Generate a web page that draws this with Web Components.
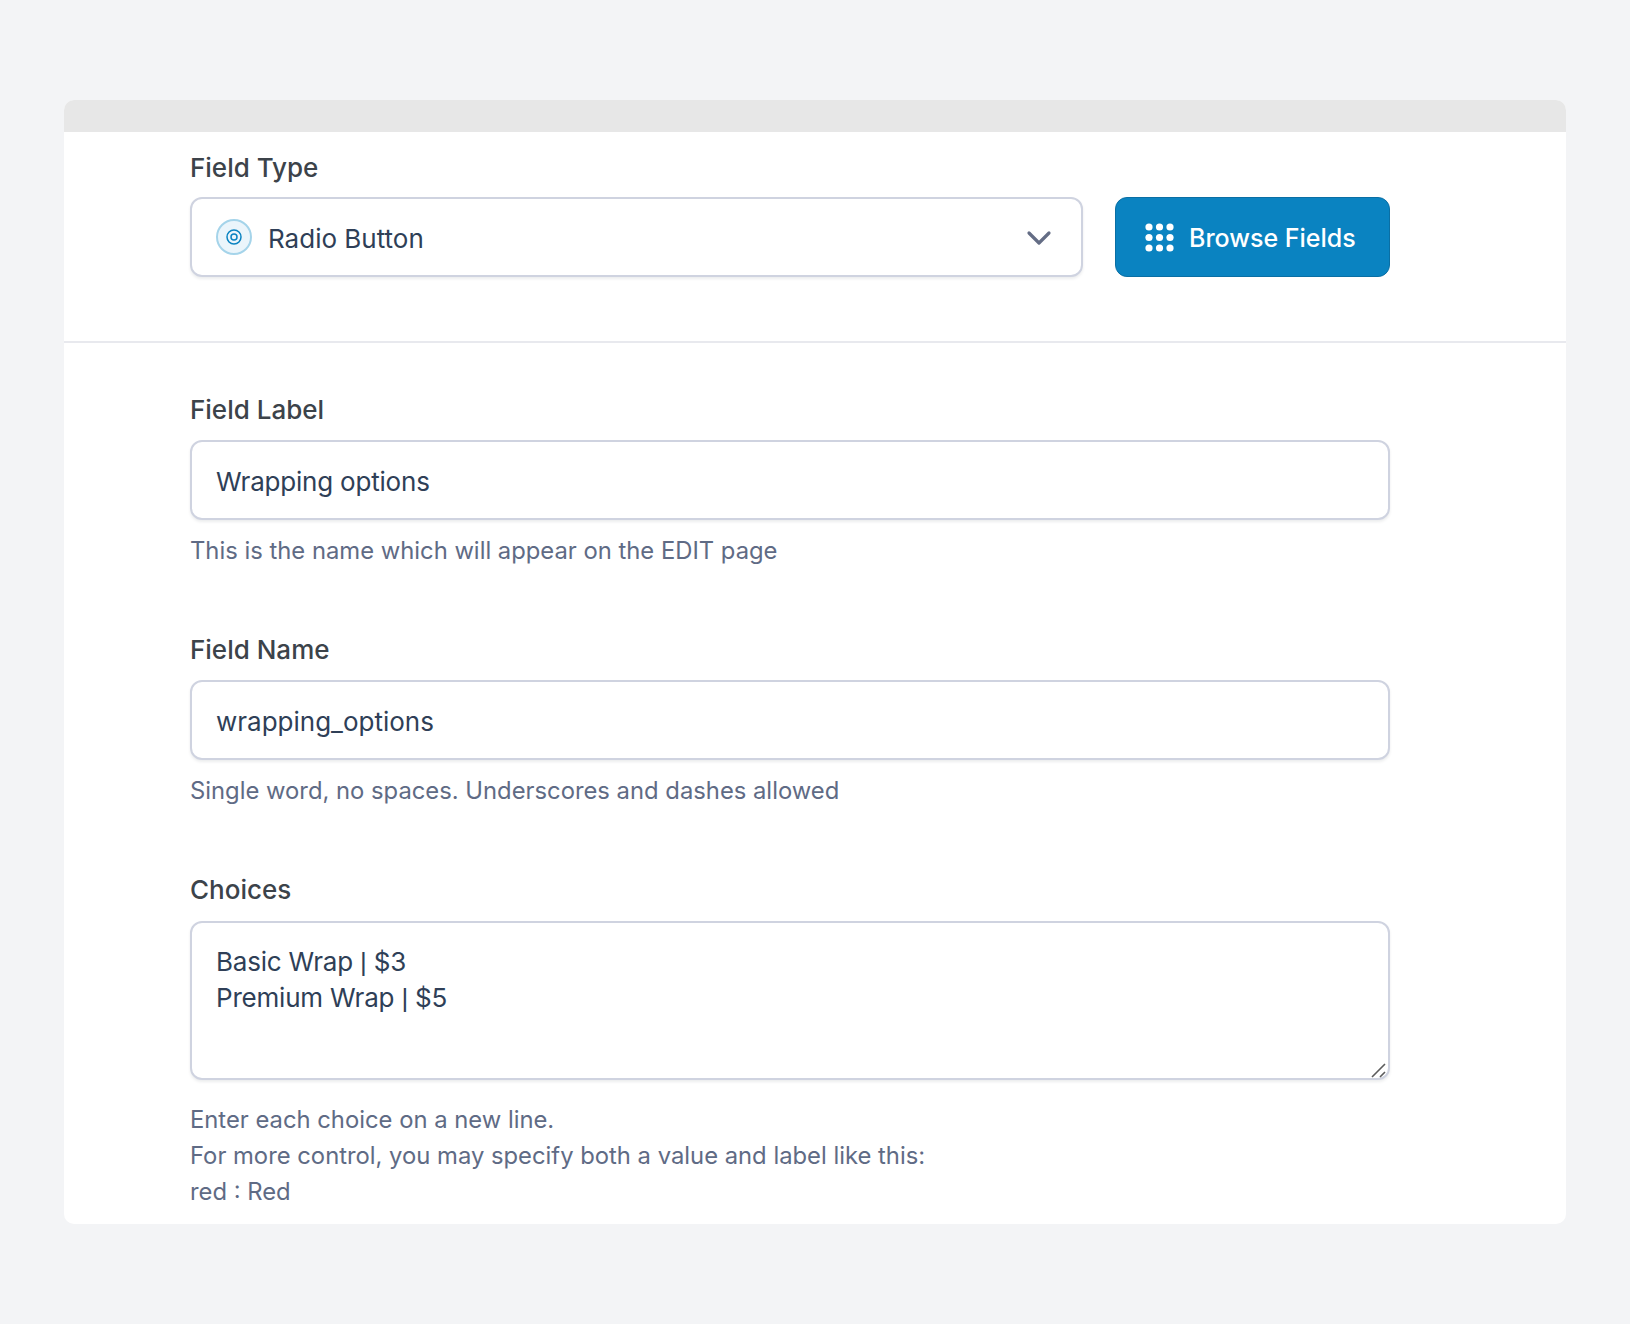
<!DOCTYPE html>
<html lang="en">
<head>
<meta charset="utf-8">
<title>Field settings</title>
<style>
  html, body { margin: 0; background: #f3f4f6; }
  body { padding: 100px 64px 0; height: 1224px; font-family: Inter, "Noto Sans", sans-serif; -webkit-font-smoothing: antialiased; }
  .pipe { font-family: "Liberation Sans", sans-serif; }
  .snug { letter-spacing: -0.2px; }
</style>
</head>
<body>
<field-card>
  <form-section slot="top" compact>
    <form-field label="Field Type" tight>
      <type-row>
        <type-select>Radio Button</type-select>
        <browse-button>Browse Fields</browse-button>
      </type-row>
    </form-field>
  </form-section>
  <form-section>
    <form-field label="Field Label" hint="This is the name which will appear on the EDIT page">
      <text-box class="snug">Wrapping options</text-box>
    </form-field>
    <form-field label="Field Name" hint="Single word, no spaces. Underscores and dashes allowed">
      <text-box>wrapping_options</text-box>
    </form-field>
    <form-field label="Choices" spaced>
      <text-box class="snug" multiline>
        <div>Basic Wrap <span class="pipe">|</span> $3</div>
        <div>Premium Wrap <span class="pipe">|</span> $5</div>
      </text-box>
      <span slot="hint">Enter each choice on a new line.<br>For more control, you may specify both a value and label like this:<br>red : Red</span>
    </form-field>
  </form-section>
</field-card>

<script>
  class FieldCard extends HTMLElement {
    constructor() {
      super();
      this.attachShadow({ mode: 'open' });
      this.shadowRoot.innerHTML = `
      <style>
        :host { display: block; width: 1502px; height: 1124px; background: #fff; border-radius: 10px; overflow: hidden; }
        .head { height: 32px; background: #e7e7e7; }
        .top { display: block; border-bottom: 2px solid #e8e9ee; }
      </style>
      <div class="head"></div>
      <div class="top"><slot name="top"></slot></div>
      <slot></slot>
      `;
    }
  }

  class FormSection extends HTMLElement {
    constructor() {
      super();
      this.attachShadow({ mode: 'open' });
      this.shadowRoot.innerHTML = `
      <style>
        :host { display: flex; flex-direction: column; gap: 66px; padding: 52px 176px 0 126px; }
        :host([compact]) { padding-top: 21px; padding-bottom: 64px; }
      </style>
      <slot></slot>
      `;
    }
  }

  class FormField extends HTMLElement {
    constructor() {
      super();
      this.attachShadow({ mode: 'open' });
      const label = this.getAttribute('label') || '';
      const hint = this.getAttribute('hint') || '';
      const hasHint = hint || this.querySelector('[slot="hint"]');
      this.shadowRoot.innerHTML = `
      <style>
        :host { display: block; }
        label { display: block; font-size: 26px; line-height: 30px; font-weight: 500; color: #3c434a; margin-bottom: 15px; }
        :host([tight]) label { margin-bottom: 14px; }
        :host([spaced]) label { margin-bottom: 16px; }
        .hint { font-size: 23.8px; line-height: 36px; color: #5f6b85; margin-top: 13px; }
        :host([spaced]) .hint { margin-top: 22px; }
      </style>
      <label>${label}</label>
      <slot></slot>
      ${hasHint ? `<div class="hint"><slot name="hint">${hint}</slot></div>` : ''}
      `;
    }
  }

  class TypeRow extends HTMLElement {
    constructor() {
      super();
      this.attachShadow({ mode: 'open' });
      this.shadowRoot.innerHTML = `
      <style>
        :host { display: flex; gap: 32px; }
      </style>
      <slot></slot>
      `;
    }
  }

  class TypeSelect extends HTMLElement {
    constructor() {
      super();
      this.attachShadow({ mode: 'open' });
      this.shadowRoot.innerHTML = `
      <style>
        :host { flex: 1; box-sizing: border-box; height: 80px; display: flex; align-items: center; gap: 16px; padding: 0 29px 0 24px; background: #fff; border: 2px solid #cfd3e0; border-radius: 12px; box-shadow: 0 2px 3px rgba(16, 24, 40, .08); font-size: 26px; color: #2f3f57; }
        .text { flex: 1; padding-top: 2px; }
        .badge { width: 36px; height: 36px; box-sizing: border-box; border-radius: 50%; background: #ebf5fb; border: 2px solid #a5d4ea; display: flex; align-items: center; justify-content: center; }
        .arrow { margin-top: 2px; }
      </style>
      <span class="badge">
        <svg width="18" height="18" viewBox="0 0 18 18" fill="none" stroke="#0a83c1" stroke-width="1.5"><circle cx="9" cy="9" r="7"/><circle cx="9" cy="9" r="3"/></svg>
      </span>
      <span class="text"><slot></slot></span>
      <svg class="arrow" width="26" height="16" viewBox="0 0 26 16" fill="none" stroke="#646d85" stroke-width="3.2" stroke-linecap="round" stroke-linejoin="round"><path d="M3 3l10 10L23 3"/></svg>
      `;
    }
  }

  class BrowseButton extends HTMLElement {
    constructor() {
      super();
      this.attachShadow({ mode: 'open' });
      this.shadowRoot.innerHTML = `
      <style>
        :host { box-sizing: border-box; width: 275px; height: 80px; display: flex; align-items: center; gap: 15px; padding-left: 29px; background: #0a83c1; border: 1px solid #0a6fa4; border-radius: 12px; font-size: 25px; font-weight: 500; color: #fff; }
        .text { padding-top: 2px; }
      </style>
      <svg width="29" height="29" viewBox="0 0 29 29" fill="#fff">
        <circle cx="4" cy="4" r="3.6"/><circle cx="14.5" cy="4" r="3.6"/><circle cx="25" cy="4" r="3.6"/>
        <circle cx="4" cy="14.5" r="3.6"/><circle cx="14.5" cy="14.5" r="3.6"/><circle cx="25" cy="14.5" r="3.6"/>
        <circle cx="4" cy="25" r="3.6"/><circle cx="14.5" cy="25" r="3.6"/><circle cx="25" cy="25" r="3.6"/>
      </svg>
      <span class="text"><slot></slot></span>
      `;
    }
  }

  class TextBox extends HTMLElement {
    constructor() {
      super();
      this.attachShadow({ mode: 'open' });
      this.shadowRoot.innerHTML = `
      <style>
        :host { display: flex; align-items: center; position: relative; box-sizing: border-box; height: 80px; padding: 3px 24px 0; background: #fff; border: 2px solid #cfd3e0; border-radius: 12px; box-shadow: 0 2px 3px rgba(16, 24, 40, .08); font-size: 26px; line-height: 36px; color: #2f3f57; }
        :host([multiline]) { align-items: flex-start; height: 159px; padding-top: 21px; }
        .value { white-space: nowrap; }
        .grip { display: none; position: absolute; right: 1px; bottom: 0; }
        :host([multiline]) .grip { display: block; }
      </style>
      <div class="value"><slot></slot></div>
      <svg class="grip" width="16" height="15" viewBox="0 0 16 15" stroke="#5c5c5c" stroke-width="1.6" fill="none"><path d="M1 14L14 1M9 14l5-5"/></svg>
      `;
    }
  }

  customElements.define('field-card', FieldCard);
  customElements.define('form-section', FormSection);
  customElements.define('form-field', FormField);
  customElements.define('type-row', TypeRow);
  customElements.define('type-select', TypeSelect);
  customElements.define('browse-button', BrowseButton);
  customElements.define('text-box', TextBox);
</script>
</body>
</html>
